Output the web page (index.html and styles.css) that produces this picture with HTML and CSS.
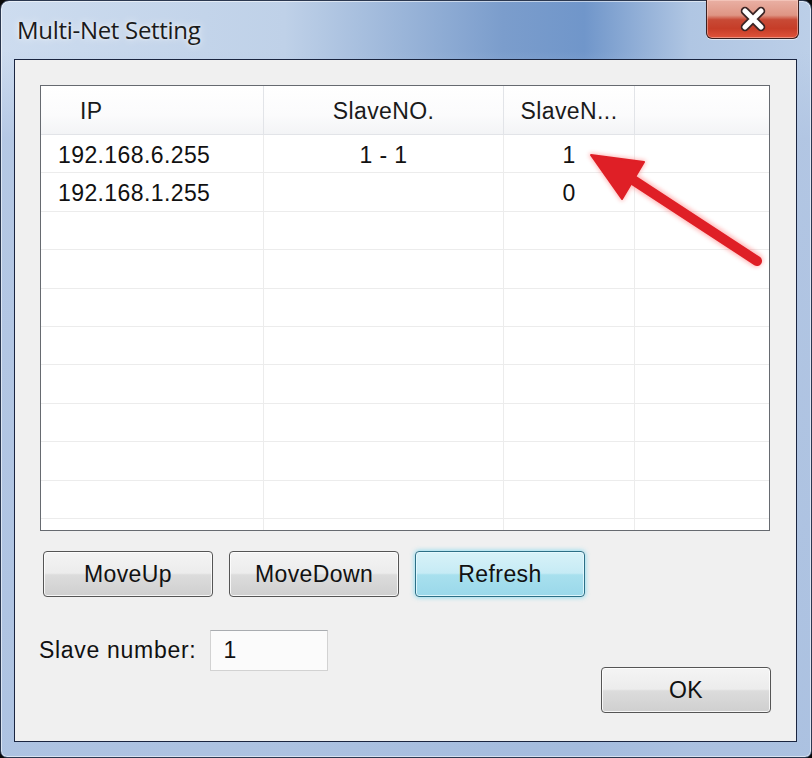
FILE: index.html
```html
<!DOCTYPE html>
<html>
<head>
<meta charset="utf-8">
<title>Multi-Net Setting</title>
<link rel="stylesheet" href="styles.css">
</head>
<body>
<div class="window">
  <div class="titlebar">
    <span class="title">Multi-Net Setting</span>
    <div class="close" aria-label="Close">
      <svg width="30" height="26" viewBox="0 0 30 26">
        <path d="M7 5 L23 21 M23 5 L7 21" stroke="#3a2424" stroke-width="8.5" stroke-linecap="round"/>
        <path d="M7 5 L23 21 M23 5 L7 21" stroke="#ffffff" stroke-width="5" stroke-linecap="round"/>
      </svg>
    </div>
  </div>
  <div class="client">
    <div class="listview">
      <div class="lv-row lv-header">
        <div class="cell c1 head-ip">IP</div>
        <div class="cell c2">SlaveNO.</div>
        <div class="cell c3">SlaveN...</div>
        <div class="cell c4"></div>
      </div>
      <div class="lv-body">
        <div class="lv-row"><div class="cell c1">192.168.6.255</div><div class="cell c2">1 - 1</div><div class="cell c3">1</div><div class="cell c4"></div></div>
        <div class="lv-row"><div class="cell c1">192.168.1.255</div><div class="cell c2"></div><div class="cell c3">0</div><div class="cell c4"></div></div>
        <div class="lv-row"><div class="cell c1"></div><div class="cell c2"></div><div class="cell c3"></div><div class="cell c4"></div></div>
        <div class="lv-row"><div class="cell c1"></div><div class="cell c2"></div><div class="cell c3"></div><div class="cell c4"></div></div>
        <div class="lv-row"><div class="cell c1"></div><div class="cell c2"></div><div class="cell c3"></div><div class="cell c4"></div></div>
        <div class="lv-row"><div class="cell c1"></div><div class="cell c2"></div><div class="cell c3"></div><div class="cell c4"></div></div>
        <div class="lv-row"><div class="cell c1"></div><div class="cell c2"></div><div class="cell c3"></div><div class="cell c4"></div></div>
        <div class="lv-row"><div class="cell c1"></div><div class="cell c2"></div><div class="cell c3"></div><div class="cell c4"></div></div>
        <div class="lv-row"><div class="cell c1"></div><div class="cell c2"></div><div class="cell c3"></div><div class="cell c4"></div></div>
        <div class="lv-row"><div class="cell c1"></div><div class="cell c2"></div><div class="cell c3"></div><div class="cell c4"></div></div>
        <div class="lv-row"><div class="cell c1"></div><div class="cell c2"></div><div class="cell c3"></div><div class="cell c4"></div></div>
      </div>
    </div>
    <div class="btn-row">
      <button class="btn">MoveUp</button>
      <button class="btn">MoveDown</button>
      <button class="btn btn-focus">Refresh</button>
    </div>
    <div class="footer">
      <div class="field">
        <span class="label">Slave number:</span>
        <div class="input">1</div>
      </div>
      <button class="btn btn-ok">OK</button>
    </div>
  </div>
  <svg class="arrow" width="190" height="135" viewBox="0 0 190 135">
    <defs>
      <filter id="glow" x="-20%" y="-20%" width="140%" height="140%">
        <feGaussianBlur stdDeviation="2"/>
      </filter>
    </defs>
    <g filter="url(#glow)" opacity="0.35">
      <path d="M50 38 L176 120" stroke="#ff3a3a" stroke-width="14" stroke-linecap="round"/>
      <path d="M11 15 L64 22 L42 59 Z" fill="#ff3a3a" stroke="#ff3a3a" stroke-width="4" stroke-linejoin="round"/>
    </g>
    <path d="M50 38 L177 121" stroke="#df1f26" stroke-width="10" stroke-linecap="round"/>
    <path d="M11 15 L64 22 L42 59 Z" fill="#df1f26" stroke="#df1f26" stroke-width="2" stroke-linejoin="round"/>
  </svg>
</div>
</body>
</html>
```
FILE: styles.css
```css
html, body {
  margin: 0;
  padding: 0;
  background: #0a0a0a;
}

.window {
  position: relative;
  width: 812px;
  height: 758px;
  box-sizing: border-box;
  border: 1px solid #2b3850;
  border-radius: 9px 9px 7px 7px;
  padding: 0 14px 15px 13px;
  display: flex;
  flex-direction: column;
  background:
    linear-gradient(180deg, rgba(180,200,228,0) 0px, rgba(180,200,228,0) 50px, rgba(176,196,226,0.85) 140px, rgba(170,192,224,0.9) 100%),
    linear-gradient(90deg, #cddcef 0%, #bfd1e8 35%, #7b9dcc 62%, #7096ca 72%, #b0c6e3 85%, #bccfe8 100%);
  box-shadow: inset 0 0 0 1px rgba(255,255,255,0.55);
  font-family: "Liberation Sans", Arial, sans-serif;
}

.titlebar {
  height: 58px;
  display: flex;
  justify-content: space-between;
  align-items: flex-start;
  flex-shrink: 0;
}

.title {
  margin: 13px 0 0 3px;
  font-family: "Open Sans", "Noto Sans", sans-serif;
  font-size: 24px;
  line-height: 32px;
  color: #1b1b1b;
  letter-spacing: -0.3px;
  text-shadow: 0 0 8px rgba(255,255,255,0.85), 0 0 3px rgba(255,255,255,0.6);
}

.close {
  width: 93px;
  height: 39px;
  margin-top: -1px;
  margin-right: -2px;
  box-sizing: border-box;
  border: 1px solid #3b2020;
  border-top: none;
  border-radius: 0 0 6px 6px;
  background: linear-gradient(180deg, #e9b0a4 0%, #df9584 40%, #c84a36 52%, #c63d28 75%, #e0533a 100%);
  box-shadow: inset 0 0 0 1px rgba(255,220,210,0.45), 0 1px 0 rgba(255,255,255,0.6);
  display: flex;
  align-items: center;
  justify-content: center;
}

.close svg {
  display: block;
  margin-top: -1px;
}

.client {
  flex: 1;
  border: 1px solid #1a2540;
  background: #f0f0f0;
  padding: 25px 26px 0 25px;
  font-size: 23px;
  letter-spacing: 0.4px;
  color: #111;
}

.listview {
  width: 730px;
  height: 446px;
  box-sizing: border-box;
  border: 1px solid #666a70;
  background: #ffffff;
  overflow: hidden;
}

.lv-row {
  display: grid;
  grid-template-columns: 223px 240px 131px 1fr;
  height: 38.4px;
  box-sizing: border-box;
  border-bottom: 1px solid #ececec;
}

.lv-header {
  height: 49px;
  border-bottom: 1px solid #e2e4e8;
  background: linear-gradient(180deg, #ffffff 0%, #fbfbfc 60%, #f3f4f6 100%);
  color: #1a1a1a;
}

.cell {
  border-right: 1px solid #ececec;
  display: flex;
  align-items: center;
  white-space: nowrap;
  overflow: hidden;
  padding-top: 3px;
}

.lv-header .cell {
  border-right-color: #e2e4e8;
}

.c1 {
  padding-left: 17px;
}

.head-ip {
  padding-left: 39px;
}

.c2, .c3 {
  justify-content: center;
}

.c4 {
  border-right: none;
}

.btn-row {
  display: flex;
  gap: 16px;
  margin-top: 20px;
  padding-left: 3px;
}

.btn {
  width: 170px;
  height: 46px;
  box-sizing: border-box;
  border: 1px solid #555555;
  border-radius: 4px;
  background: linear-gradient(180deg, #f4f4f4 0%, #ececec 48%, #dcdcdc 52%, #cfcfcf 100%);
  box-shadow: inset 0 0 0 1px rgba(255,255,255,0.8);
  font-family: "Liberation Sans", Arial, sans-serif;
  font-size: 23px;
  letter-spacing: 0.4px;
  color: #111;
  padding: 0;
  line-height: 44px;
}

.btn-focus {
  border-color: #2c6f86;
  background: linear-gradient(180deg, #d8f2f8 0%, #c6ebf5 48%, #a8e0ee 52%, #9ad8ea 100%);
  box-shadow: inset 0 0 0 1px rgba(230,250,255,0.85), 0 0 4px 1px rgba(120,215,240,0.7);
}

.footer {
  display: flex;
  justify-content: space-between;
  align-items: flex-start;
  margin-top: 33px;
  height: 83px;
}

.field {
  display: flex;
  align-items: center;
  margin-left: -1px;
}

.label {
  margin-right: 14px;
  letter-spacing: 0.7px;
}

.input {
  width: 118px;
  height: 41px;
  box-sizing: border-box;
  border: 1px solid #d2d2d2;
  border-top-color: #a9acb0;
  background: #fbfbfb;
  padding-left: 12px;
  display: flex;
  align-items: center;
}

.btn-ok {
  align-self: flex-end;
  margin-right: -1px;
}

.arrow {
  position: absolute;
  left: 579px;
  top: 139px;
  overflow: visible;
}
```
